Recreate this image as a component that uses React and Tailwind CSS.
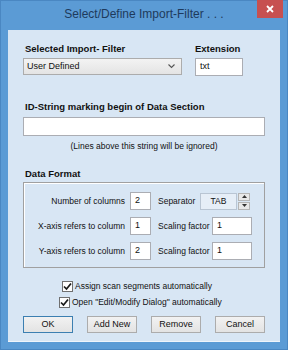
import React from 'react';

const font = "font-['Liberation_Sans',Arial,sans-serif]";

const Check = () => (
  <div className="w-[11px] h-[11px] bg-white border border-[#707070] flex items-center justify-center">
    <svg width="9" height="9" viewBox="0 0 9 9">
      <path d="M1 4.5 L3.5 7 L8 1.5" fill="none" stroke="#1a1a1a" strokeWidth="1.7" />
    </svg>
  </div>
);

const Button = ({ children, primary }) => (
  <button
    className={`w-[50px] h-[17px] text-[9px] text-[#111] bg-gradient-to-b from-[#f2f2f2] to-[#e3e3e3] border ${
      primary ? 'border-[#3c7fb1]' : 'border-[#acacac]'
    } flex items-center justify-center`}
  >
    {children}
  </button>
);

const Field = ({ value, w }) => (
  <div className={`${w} h-[18px] bg-white border border-[#abadb3] text-[9px] text-[#111] flex items-center pl-[4px]`}>
    {value}
  </div>
);

export default function App() {
  return (
    <div className={`w-[288px] h-[350px] bg-[#5b9bd5] border border-[#4a87c2] flex flex-col ${font}`}>
      {/* Title bar */}
      <div className="relative h-[29px] flex items-center justify-center">
        <span className="text-[12px] text-[#1e3a5c] -mt-[3px]">Select/Define Import-Filter . . .</span>
        <div className="absolute top-[-1px] right-[4px] w-[26px] h-[18px] bg-[#c75050] flex items-center justify-center">
          <svg width="8" height="8" viewBox="0 0 8 8">
            <path d="M1 1 L7 7 M7 1 L1 7" stroke="white" strokeWidth="1.8" />
          </svg>
        </div>
      </div>

      {/* Client area */}
      <div className="mx-[7px] h-[312px] bg-[#d8e6f4] border-b border-[#eef4fb] px-[15px] pt-[13px] text-[#111]">
        <div className="flex">
          <div className="w-[172px]">
            <div className="text-[9.5px] font-bold leading-[12px] ml-[2px]">Selected Import- Filter</div>
            <div className="mt-[3px] w-[159px] h-[17px] bg-gradient-to-b from-[#f3f3f3] to-[#e4e4e4] border border-[#acacac] flex items-center justify-between pl-[3px] pr-[6px] text-[9px]">
              <span>User Defined</span>
              <svg width="7" height="5" viewBox="0 0 7 5">
                <path d="M0.5 0.5 L3.5 3.5 L6.5 0.5" fill="none" stroke="#555" strokeWidth="1.1" />
              </svg>
            </div>
          </div>
          <div>
            <div className="text-[9.5px] font-bold leading-[12px]">Extension</div>
            <div className="mt-[3px]">
              <Field value="txt" w="w-[48px]" />
            </div>
          </div>
        </div>

        <div className="mt-[25px] text-[9.5px] font-bold leading-[12px] ml-[2px]">ID-String marking begin of Data Section</div>
        <div className="mt-[4px] w-full h-[19px] bg-white border border-[#abadb3]" />
        <div className="mt-[5px] text-[8.5px] leading-[11px] text-center">(Lines above this string will be ignored)</div>

        <div className="mt-[16px] text-[9.5px] font-bold leading-[12px] ml-[2px]">Data Format</div>
        <div className="mt-[2px] h-[86px] border border-[#a0a0a0] shadow-[inset_1px_1px_0_#fff] pt-[9px] flex flex-col gap-[7px] text-[8.5px]">
          <div className="flex items-center">
            <div className="w-[101px] text-right">Number of columns</div>
            <div className="ml-[5px]"><Field value="2" w="w-[21px]" /></div>
            <div className="ml-[7px] w-[42px]">Separator</div>
            <div className="w-[37px] h-[17px] bg-[#e6eef7] border border-[#b9c5d3] flex items-center justify-center">TAB</div>
            <div className="ml-[1px] w-[12px] h-[17px] flex flex-col gap-[1px]">
              <div className="flex-1 bg-[#e8e8e8] border border-[#b5b5b5] flex items-center justify-center">
                <svg width="5" height="3" viewBox="0 0 5 3"><path d="M0 3 L2.5 0 L5 3 Z" fill="#333" /></svg>
              </div>
              <div className="flex-1 bg-[#e8e8e8] border border-[#b5b5b5] flex items-center justify-center">
                <svg width="5" height="3" viewBox="0 0 5 3"><path d="M0 0 L2.5 3 L5 0 Z" fill="#333" /></svg>
              </div>
            </div>
          </div>
          <div className="flex items-center">
            <div className="w-[101px] text-right">X-axis refers to column</div>
            <div className="ml-[5px]"><Field value="1" w="w-[21px]" /></div>
            <div className="ml-[7px] w-[54px]">Scaling factor</div>
            <Field value="1" w="w-[40px]" />
          </div>
          <div className="flex items-center">
            <div className="w-[101px] text-right">Y-axis refers to column</div>
            <div className="ml-[5px]"><Field value="2" w="w-[21px]" /></div>
            <div className="ml-[7px] w-[54px]">Scaling factor</div>
            <Field value="1" w="w-[40px]" />
          </div>
        </div>

        <div className="mt-[11px] flex flex-col gap-[2px] text-[8.5px]">
          <div className="h-[14px] flex items-center gap-[2px] ml-[39px]">
            <Check />
            <span>Assign scan segments automatically</span>
          </div>
          <div className="h-[14px] flex items-center gap-[2px] ml-[36px]">
            <Check />
            <span>Open "Edit/Modify Dialog" automatically</span>
          </div>
        </div>

        <div className="mt-[7px] flex justify-between">
          <Button primary>OK</Button>
          <Button>Add New</Button>
          <Button>Remove</Button>
          <Button>Cancel</Button>
        </div>
      </div>
    </div>
  );
}
